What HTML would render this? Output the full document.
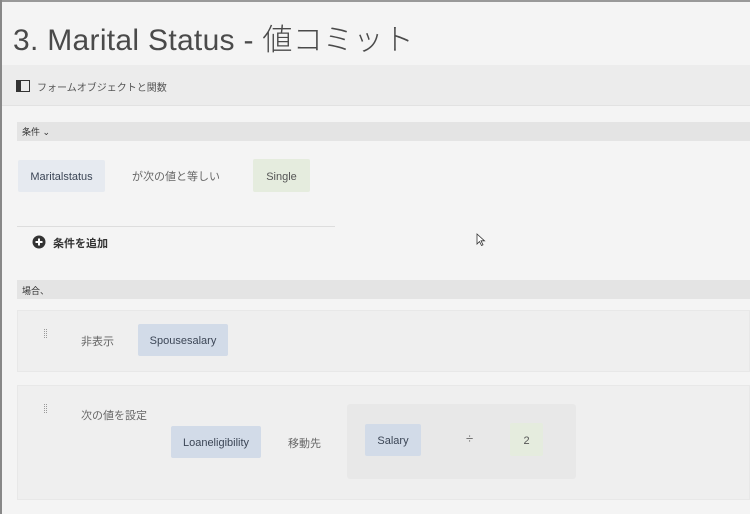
<!DOCTYPE html>
<html><head><meta charset="utf-8"><style>
*{margin:0;padding:0;box-sizing:border-box}
body{width:750px;height:514px;overflow:hidden;background:#f4f4f4;font-family:"Liberation Sans","Noto Sans CJK JP",sans-serif;position:relative;color:#444}
.a{position:absolute}
.chip{position:absolute;font-size:11px;color:#3c4656;display:flex;align-items:center;justify-content:center;border-radius:2px;padding-top:2px}
.blue{background:#d2dbe8}
.lb{background:#e6eaf0}
.gr{background:#e5ecde;color:#555}
.t{position:absolute;font-size:11px;color:#666;white-space:nowrap}
</style></head><body>
<div class="a" style="left:0;top:0;width:750px;height:2px;background:#999"></div>
<div class="a" style="left:0;top:0;width:2px;height:514px;background:#888"></div>
<div class="a" style="left:13px;top:15px;font-size:30px;color:#4a4a4a;font-weight:300;letter-spacing:0.3px;white-space:nowrap;font-family:'Liberation Sans','Noto Sans CJK JP',sans-serif">3. Marital Status - 値コミット</div>
<div class="a" style="left:2px;top:65px;width:748px;height:41px;background:#ececec;border-bottom:1px solid #e2e2e2"></div>
<svg class="a" style="left:16px;top:80px" width="14" height="12"><rect x="0.5" y="0.5" width="13" height="11" fill="none" stroke="#333"/><rect x="0" y="0" width="5" height="12" fill="#333"/></svg>
<div class="t" style="left:37px;top:79px;font-size:10px;color:#555">フォームオブジェクトと関数</div>
<div class="a" style="left:17px;top:122px;width:733px;height:19px;background:#e4e4e4"></div>
<div class="t" style="left:22px;top:125px;font-size:9px;color:#333">条件 ⌄</div>
<div class="chip lb" style="left:18px;top:160px;width:87px;height:32px">Maritalstatus</div>
<div class="t" style="left:132px;top:168px">が次の値と等しい</div>
<div class="chip gr" style="left:253px;top:159px;width:57px;height:33px">Single</div>
<div class="a" style="left:17px;top:226px;width:318px;height:1px;background:#ddd"></div>
<svg class="a" style="left:32px;top:235px" width="14" height="14"><circle cx="7" cy="7" r="6.5" fill="#333"/><path d="M7 3.5v7M3.5 7h7" stroke="#fff" stroke-width="2"/></svg>
<div class="t" style="left:53px;top:235px;font-size:11px;color:#333;font-weight:bold">条件を追加</div>
<svg class="a" style="left:476px;top:233px" width="10" height="14"><path d="M1 1v10l2.5-2.5 2 4 1.5-.7-2-4h3.5z" fill="#fff" stroke="#333" stroke-width="0.8"/></svg>
<div class="a" style="left:17px;top:280px;width:733px;height:19px;background:#e4e4e4"></div>
<div class="t" style="left:22px;top:284px;font-size:9px;color:#333">場合、</div>
<div class="a" style="left:17px;top:310px;width:733px;height:62px;background:#efefef;border:1px solid #e8e8e8"></div>
<div class="a" style="left:44px;top:329px;width:3px;height:9px;border-left:1px dotted #999;border-right:1px dotted #999"></div>
<div class="t" style="left:81px;top:333px">非表示</div>
<div class="chip blue" style="left:138px;top:324px;width:90px;height:32px">Spousesalary</div>
<div class="a" style="left:17px;top:385px;width:733px;height:115px;background:#efefef;border:1px solid #e8e8e8"></div>
<div class="a" style="left:44px;top:404px;width:3px;height:9px;border-left:1px dotted #999;border-right:1px dotted #999"></div>
<div class="t" style="left:81px;top:407px">次の値を設定</div>
<div class="chip blue" style="left:171px;top:426px;width:90px;height:32px">Loaneligibility</div>
<div class="t" style="left:288px;top:435px">移動先</div>
<div class="a" style="left:347px;top:404px;width:229px;height:75px;background:#e8e8e8;border-radius:3px"></div>
<div class="chip blue" style="left:365px;top:424px;width:56px;height:32px">Salary</div>
<div class="t" style="left:466px;top:431px;font-size:13px">÷</div>
<div class="chip gr" style="left:510px;top:423px;width:33px;height:33px">2</div>
</body></html>
